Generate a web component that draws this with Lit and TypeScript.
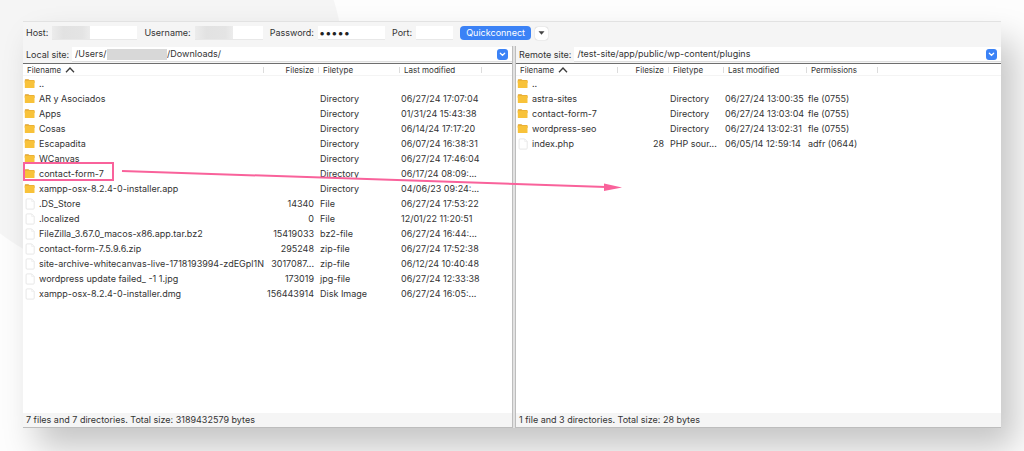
import { LitElement, html, svg, css, nothing } from "lit";
import { customElement, property } from "lit/decorators.js";

interface Entry {
  name: string;
  kind: "folder" | "file";
  size?: string;
  type?: string;
  modified?: string;
  permissions?: string;
}

const dir = (name: string, modified = "", permissions = ""): Entry => ({
  name, kind: "folder", type: modified ? "Directory" : "", modified, permissions,
});
const file = (name: string, size: string, type: string, modified: string, permissions = ""): Entry => ({
  name, kind: "file", size, type, modified, permissions,
});

const LOCAL: Entry[] = [
  dir(".."),
  dir("AR y Asociados", "06/27/24 17:07:04"),
  dir("Apps", "01/31/24 15:43:38"),
  dir("Cosas", "06/14/24 17:17:20"),
  dir("Escapadita", "06/07/24 16:38:31"),
  dir("WCanvas", "06/27/24 17:46:04"),
  dir("contact-form-7", "06/17/24 08:09:..."),
  dir("xampp-osx-8.2.4-0-installer.app", "04/06/23 09:24:..."),
  file(".DS_Store", "14340", "File", "06/27/24 17:53:22"),
  file(".localized", "0", "File", "12/01/22 11:20:51"),
  file("FileZilla_3.67.0_macos-x86.app.tar.bz2", "15419033", "bz2-file", "06/27/24 16:44:..."),
  file("contact-form-7.5.9.6.zip", "295248", "zip-file", "06/27/24 17:52:38"),
  file("site-archive-whitecanvas-live-1718193994-zdEGpl1N", "3017087...", "zip-file", "06/12/24 10:40:48"),
  file("wordpress update failed_ -1 1.jpg", "173019", "jpg-file", "06/27/24 12:33:38"),
  file("xampp-osx-8.2.4-0-installer.dmg", "156443914", "Disk Image", "06/27/24 16:05:..."),
];

const REMOTE: Entry[] = [
  dir(".."),
  dir("astra-sites", "06/27/24 13:00:35", "fle (0755)"),
  dir("contact-form-7", "06/27/24 13:03:04", "fle (0755)"),
  dir("wordpress-seo", "06/27/24 13:02:31", "fle (0755)"),
  file("index.php", "28", "PHP sour...", "06/05/14 12:59:14", "adfr (0644)"),
];

const folderIcon = html`<svg class="icon" width="12" height="12" viewBox="0 0 12 12" aria-hidden="true">
  <path d="M.8 1.9Q.8 1.2 1.5 1.2H4.4L5.4 2H9.8Q10.5 2 10.5 2.700V5H.8Z" fill="#dfa02c"/>
  <rect x=".8" y="2.600" width="9.7" height="7.400" rx=".6" fill="#f8c23a"/>
</svg>`;
const fileIcon = html`<svg class="icon" width="12" height="12" viewBox="0 0 12 12" aria-hidden="true">
  <path d="M3 .9H7.600L10.2 3.500V10.2Q10.2 11.1 9.300 11.1H3Q2.1 11.1 2.1 10.2V1.800Q2.1 .9 3 .9Z" fill="#fff" stroke="#dedede" stroke-width=".7"/>
  <path d="M7.600 .9V3.500H10.2" fill="none" stroke="#e6e6e6" stroke-width=".5"/>
</svg>`;

@customElement("file-pane")
export class FilePane extends LitElement {
  @property() label = "";
  @property() path = "";
  @property() redactedPath = "";
  @property() status = "";
  @property({ attribute: false }) entries: Entry[] = [];
  @property({ type: Boolean, reflect: true }) remote = false;

  static styles = css`
    :host { display: flex; flex-direction: column; min-width: 0; background: #fff; }
    .site { display: flex; align-items: center; height: 17px; background: #f5f5f5; border-bottom: 1px solid #6e6e6e; }
    label { padding: 0 3px; white-space: nowrap; }
    .combo { display: flex; align-items: center; flex: 1; min-width: 0; height: 14px; background: #fff; border-bottom: 1px solid #dedede; padding: 0 4px 0 3px; }
    .path { font: inherit; color: inherit; border: 0; padding: 0; margin: 0; background: none; outline: 0; min-width: 0; flex: 1; }
    .path.root { flex: none; width: 32px; }
    .redacted { width: 60px; height: 11px; background: #d8d8d8; }
    .open { display: grid; place-items: center; width: 11px; height: 11px; padding: 0; border: 0; border-radius: 3px; background: #3b82f6; }
    .list { flex: 1; min-height: 0; }
    table { width: 100%; table-layout: fixed; border-collapse: separate; border-spacing: 0; }
    th, td { padding: 0; text-align: left; font-weight: 400; white-space: nowrap; }
    th { height: 12px; font-size: 8px; line-height: 12px; padding-left: 4px; background: linear-gradient(#dcdcdc, #dcdcdc) right 3px / 1px 6px no-repeat; box-shadow: inset 0 -1px #f4f4f4; }
    th:last-child { background: none; }
    td { height: 15px; line-height: 15px; padding-left: 1px; }
    th.num, td.num { text-align: right; padding: 0 5px 0 0; }
    .name { display: flex; align-items: center; gap: 3px; }
    .icon { flex: none; display: block; }
    .sort { margin-left: 4px; }
    .c-name { width: 241px; } .c-size { width: 55px; } .c-type { width: 81px; } .c-date { width: 82px; }
    :host([remote]) .c-name { width: 102px; }
    :host([remote]) .c-size { width: 51px; }
    :host([remote]) .c-type { width: 55px; }
    :host([remote]) .c-date { width: 83px; }
    .c-perm { width: 71px; }
    footer { height: 14px; line-height: 14px; padding: 0 3px; background: #f5f5f5; border-bottom: 1px solid #bdbdbd; }
  `;

  render() {
    return html`
      <div class="site">
        <label for="path">${this.label}</label>
        <div class="combo">
          ${this.redactedPath
            ? html`<input class="path root" id="path" .value=${this.redactedPath} /><span class="redacted"></span>`
            : nothing}
          <input class="path" id=${this.redactedPath ? "rest" : "path"} aria-label=${this.label} .value=${this.path} />
          <button class="open" aria-label="Show recent paths">
            <svg width="7" height="5" viewBox="0 0 7 5"><path d="M1.3 1.2L3.5 3.3L5.7 1.2" fill="none" stroke="#fff" stroke-width="1.2" stroke-linecap="round"/></svg>
          </button>
        </div>
      </div>
      <div class="list">
        <table>
          <colgroup>
            <col class="c-name" /><col class="c-size" /><col class="c-type" /><col class="c-date" />
            ${this.remote ? html`<col class="c-perm" />` : nothing}
            <col />
          </colgroup>
          <thead>
            <tr>
              <th>Filename<svg class="sort" width="10" height="6" viewBox="0 0 10 6"><path d="M1 5.2L5 1L9 5.2" fill="none" stroke="#3c3c3c" stroke-width="1.3"/></svg></th>
              <th class="num">Filesize</th>
              <th>Filetype</th>
              <th>Last modified</th>
              ${this.remote ? html`<th>Permissions</th>` : nothing}
              <th></th>
            </tr>
          </thead>
          <tbody>
            ${this.entries.map((e) => html`<tr>
              <td><span class="name">${e.kind === "folder" ? folderIcon : fileIcon}<span>${e.name}</span></span></td>
              <td class="num">${e.size}</td>
              <td>${e.type}</td>
              <td>${e.modified}</td>
              ${this.remote ? html`<td>${e.permissions}</td>` : nothing}
              <td></td>
            </tr>`)}
          </tbody>
        </table>
      </div>
      <footer>${this.status}</footer>
    `;
  }
}

@customElement("app-root")
export class AppRoot extends LitElement {
  static styles = css`
    :host {
      display: block; box-sizing: border-box; min-height: 100vh; padding: 21px 23px 23px; overflow: hidden;
      font: 9px/12px Inter, "Liberation Sans", sans-serif; color: #333;
      background: radial-gradient(circle at 130px 64px, #f5f5f5 213px, #fdfdfd 214px);
    }
    .window {
      position: relative; display: flex; flex-direction: column; box-sizing: border-box;
      min-height: calc(100vh - 44px); background: #f5f5f5; border-top: 1px solid #e2e2e2;
      box-shadow: 14px 20px 32px rgba(0, 0, 0, 0.22);
    }
    .toolbar { display: flex; align-items: center; height: 22px; padding: 0 3px; margin-bottom: 2px; }
    .toolbar label { margin-right: 4px; white-space: nowrap; }
    .field { display: flex; height: 13px; background: #fff; border-bottom: 1px solid #e8e8e8; margin-right: 7px; }
    .field input { min-width: 0; width: 100%; border: 0; padding: 0 2px; margin: 0; font: inherit; color: #222; background: none; outline: 0; }
    .field input[type="password"] { font-size: 11px; padding: 0 1px; }
    .blur { flex: none; width: 38px; background: linear-gradient(90deg, #ececec, #e2e2e2 30%, #e4e4e4 80%, #ececec); }
    .host { width: 85px; } .user { width: 68px; } .pass { width: 67px; } .port { width: 37px; }
    .connect { height: 14px; width: 71px; padding: 0; border: 0; border-radius: 4px; background: #3b82f6; color: #fff; font: inherit; }
    .more { display: grid; place-items: center; width: 13px; height: 13px; padding: 0; margin-left: 4px; border: 0; border-radius: 3px; background: #fff; box-shadow: 0 0 1px rgba(0, 0, 0, 0.35); }
    .panes { flex: 1; display: grid; grid-template-columns: 489fr 4px 485fr; }
    .splitter { background: #e2e2e2; border: solid #bdbdbd; border-width: 0 1px; }
    .marks { position: absolute; inset: 0; width: 100%; height: 100%; pointer-events: none; overflow: visible; }
  `;

  render() {
    return html`
      <main class="window">
        <form class="toolbar" @submit=${(e: Event) => e.preventDefault()}>
          <label for="host">Host:</label>
          <span class="field host"><span class="blur"></span><input id="host" /></span>
          <label for="user">Username:</label>
          <span class="field user"><span class="blur"></span><input id="user" /></span>
          <label for="pass">Password:</label>
          <span class="field pass"><input id="pass" type="password" value="12345" /></span>
          <label for="port">Port:</label>
          <span class="field port"><input id="port" /></span>
          <button class="connect">Quickconnect</button>
          <button class="more" type="button" aria-label="Recent connections">
            <svg width="7" height="4" viewBox="0 0 7 4"><path d="M.5 .2H6.5L3.5 3.8Z" fill="#444"/></svg>
          </button>
        </form>
        <div class="panes">
          <file-pane label="Local site:" redactedPath="/Users/" path="/Downloads/" .entries=${LOCAL}
            status="7 files and 7 directories. Total size: 3189432579 bytes"></file-pane>
          <div class="splitter"></div>
          <file-pane remote label="Remote site:" path="/test-site/app/public/wp-content/plugins" .entries=${REMOTE}
            status="1 file and 3 directories. Total size: 28 bytes"></file-pane>
        </div>
        <svg class="marks" aria-hidden="true">
          ${svg`<rect x="1" y="141" width="89" height="17" fill="none" stroke="#f9629b" stroke-width="2"/>
          <path d="M99 149L583 165" stroke="#f9629b" stroke-width="2"/>
          <path d="M581 161.500L599 165.500L581 169Z" fill="#f9629b"/>`}
        </svg>
      </main>
    `;
  }
}
